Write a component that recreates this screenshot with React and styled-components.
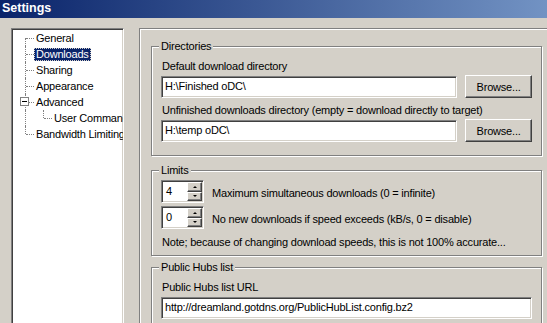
import React from "react";
import styled, { createGlobalStyle } from "styled-components";

const GlobalStyle = createGlobalStyle`
  * { box-sizing: border-box; }
  body { margin: 0; background: #d4d0c8; }
`;

const Window = styled.div`
  width: 547px;
  height: 323px;
  overflow: hidden;
  background: #d4d0c8;
  font-family: "Liberation Sans", Arial, sans-serif;
  font-size: 11px;
  letter-spacing: -0.2px;
  color: #000;
  display: flex;
  flex-direction: column;
`;

const TitleBar = styled.div`
  height: 18px;
  flex: none;
  background: linear-gradient(90deg, #0a246a 0%, #a6caf0 150%);
  color: #fff;
  font-weight: bold;
  font-size: 12.5px;
  letter-spacing: 0;
  line-height: 17px;
  padding-left: 2px;
`;

const Body = styled.div`
  flex: 1;
  display: flex;
  align-items: flex-start;
  padding: 10px 0 0 11px;
  min-height: 0;
`;

const Tree = styled.div`
  width: 113px;
  height: 400px;
  flex: none;
  background: #fff;
  border: 1px solid;
  border-color: #808080 #fff #fff #808080;
  box-shadow: inset 1px 1px 0 #404040, inset -1px -1px 0 #d4d0c8;
  padding: 1px;
  overflow: hidden;
`;

const Row = styled.div`
  display: flex;
  align-items: center;
  height: 16px;
  white-space: nowrap;
`;

const Pipe = styled.span`
  position: relative;
  flex: none;
  width: 18px;
  align-self: stretch;
  &::before {
    content: "";
    position: absolute;
    left: 12px;
    top: 0;
    bottom: 0;
    border-left: 1px dotted #808080;
  }
`;

const Branch = styled.span`
  position: relative;
  flex: none;
  width: 21px;
  align-self: stretch;
  &::before {
    content: "";
    position: absolute;
    left: 12px;
    top: ${(p) => (p.$first ? "8px" : "0")};
    bottom: ${(p) => (p.$last ? "8px" : "0")};
    border-left: 1px dotted #808080;
  }
  &::after {
    content: "";
    position: absolute;
    left: 13px;
    width: 8px;
    top: 8px;
    border-top: 1px dotted #808080;
  }
`;

const Expander = styled.span`
  position: absolute;
  left: 7px;
  top: 3px;
  width: 9px;
  height: 9px;
  background: #fff;
  border: 1px solid #808080;
  z-index: 1;
  &::before {
    content: "";
    position: absolute;
    left: 1px;
    top: 3px;
    width: 5px;
    height: 1px;
    background: #000;
  }
`;

const Item = styled.span`
  padding: 0 1px;
  line-height: 11px;
  border: 1px ${(p) => (p.$selected ? "dotted #d4d0c8" : "solid transparent")};
  background: ${(p) => (p.$selected ? "#0a246a" : "transparent")};
  color: ${(p) => (p.$selected ? "#fff" : "#000")};
`;

const Page = styled.div`
  flex: none;
  width: 416px;
  margin-left: 15px;
  height: 400px;
  border-top: 1px solid #808080;
  border-left: 1px solid #808080;
  box-shadow: inset 1px 1px 0 #fff;
  padding: 11px 12px 0 11px;
`;

const Group = styled.fieldset`
  width: 391px;
  margin: 0 0 ${(p) => p.$gap ?? 8}px;
  padding: ${(p) => p.$pt ?? 7}px 9px ${(p) => p.$pb ?? 13}px 9px;
  border: 1px solid #808080;
  box-shadow: inset 1px 1px 0 #fff, 1px 1px 0 #fff;
  min-width: 0;
`;

const Caption = styled.legend`
  padding: 0 2px;
  margin-left: -2px;
  line-height: 13px;
  background: #d4d0c8;
`;

const Label = styled.div`
  line-height: 13px;
  padding-left: 1px;
  white-space: nowrap;
  margin-top: ${(p) => p.$mt || 0}px;
`;

const FieldRow = styled.div`
  display: flex;
  align-items: flex-end;
  margin-top: ${(p) => p.$mt || 0}px;
`;

const sunken = `
  border: 1px solid;
  border-color: #808080 #fff #fff #808080;
  box-shadow: inset 1px 1px 0 #404040, inset -1px -1px 0 #d4d0c8;
`;

const TextBox = styled.div`
  ${sunken}
  width: ${(p) => p.$w}px;
  height: 22px;
  background: #fff;
  padding: 0 3px;
  line-height: 19px;
  white-space: nowrap;
  overflow: hidden;
`;

const Button = styled.button`
  width: 67px;
  height: 23px;
  margin-left: 8px;
  padding: 0;
  font: inherit;
  letter-spacing: inherit;
  color: #000;
  background: #d4d0c8;
  border: 1px solid;
  border-color: #fff #404040 #404040 #fff;
  box-shadow: inset -1px -1px 0 #808080;
`;

const SpinRow = styled.div`
  display: flex;
  align-items: center;
  margin-top: ${(p) => p.$mt || 0}px;
`;

const Spin = styled.div`
  ${sunken}
  display: flex;
  width: 43px;
  height: 23px;
  background: #fff;
  padding: 1px;
`;

const SpinValue = styled.div`
  flex: 1;
  padding-left: 3px;
  line-height: 19px;
`;

const Arrows = styled.div`
  display: flex;
  flex-direction: column;
  width: 15px;
`;

const Arrow = styled.div`
  flex: 1;
  background: #d4d0c8;
  border: 1px solid;
  border-color: #fff #404040 #404040 #fff;
  box-shadow: inset -1px -1px 0 #808080;
  display: flex;
  align-items: center;
  justify-content: center;
  &::before {
    content: "";
    border-left: 2px solid transparent;
    border-right: 2px solid transparent;
    ${(p) => (p.$down ? "border-top: 2px solid #000;" : "border-bottom: 2px solid #000;")}
  }
`;

const SpinText = styled.span`
  margin-left: 8px;
  line-height: 13px;
  padding-top: 4px;
`;

const treeItems = [
  { text: "General", first: true },
  { text: "Downloads", selected: true },
  { text: "Sharing" },
  { text: "Appearance" },
  { text: "Advanced", expander: true },
  { text: "User Commands", level: 1 },
  { text: "Bandwidth Limiting", last: true },
];

export default function App() {
  return (
    <Window>
      <GlobalStyle />
      <TitleBar>Settings</TitleBar>
      <Body>
        <Tree>
          {treeItems.map((it) => (
            <Row key={it.text}>
              {it.level === 1 ? (
                <>
                  <Pipe />
                  <Branch $last />
                </>
              ) : (
                <Branch $first={it.first} $last={it.last}>
                  {it.expander && <Expander />}
                </Branch>
              )}
              <Item $selected={it.selected}>{it.text}</Item>
            </Row>
          ))}
        </Tree>
        <Page>
          <Group>
            <Caption>Directories</Caption>
            <Label>Default download directory</Label>
            <FieldRow $mt={2}>
              <TextBox $w={297}>H:\Finished oDC\</TextBox>
              <Button>Browse...</Button>
            </FieldRow>
            <Label $mt={6}>Unfinished downloads directory (empty = download directly to target)</Label>
            <FieldRow $mt={2}>
              <TextBox $w={297}>H:\temp oDC\</TextBox>
              <Button>Browse...</Button>
            </FieldRow>
          </Group>
          <Group $pt={3} $pb={6} $gap={5}>
            <Caption>Limits</Caption>
            <SpinRow>
              <Spin>
                <SpinValue>4</SpinValue>
                <Arrows>
                  <Arrow />
                  <Arrow $down />
                </Arrows>
              </Spin>
              <SpinText>Maximum simultaneous downloads (0 = infinite)</SpinText>
            </SpinRow>
            <SpinRow $mt={3}>
              <Spin>
                <SpinValue>0</SpinValue>
                <Arrows>
                  <Arrow />
                  <Arrow $down />
                </Arrows>
              </Spin>
              <SpinText>No new downloads if speed exceeds (kB/s, 0 = disable)</SpinText>
            </SpinRow>
            <Label $mt={7}>Note; because of changing download speeds, this is not 100% accurate...</Label>
          </Group>
          <Group $gap={0}>
            <Caption>Public Hubs list</Caption>
            <Label>Public Hubs list URL</Label>
            <FieldRow $mt={3}>
              <TextBox $w={372}>http://dreamland.gotdns.org/PublicHubList.config.bz2</TextBox>
            </FieldRow>
          </Group>
        </Page>
      </Body>
    </Window>
  );
}
